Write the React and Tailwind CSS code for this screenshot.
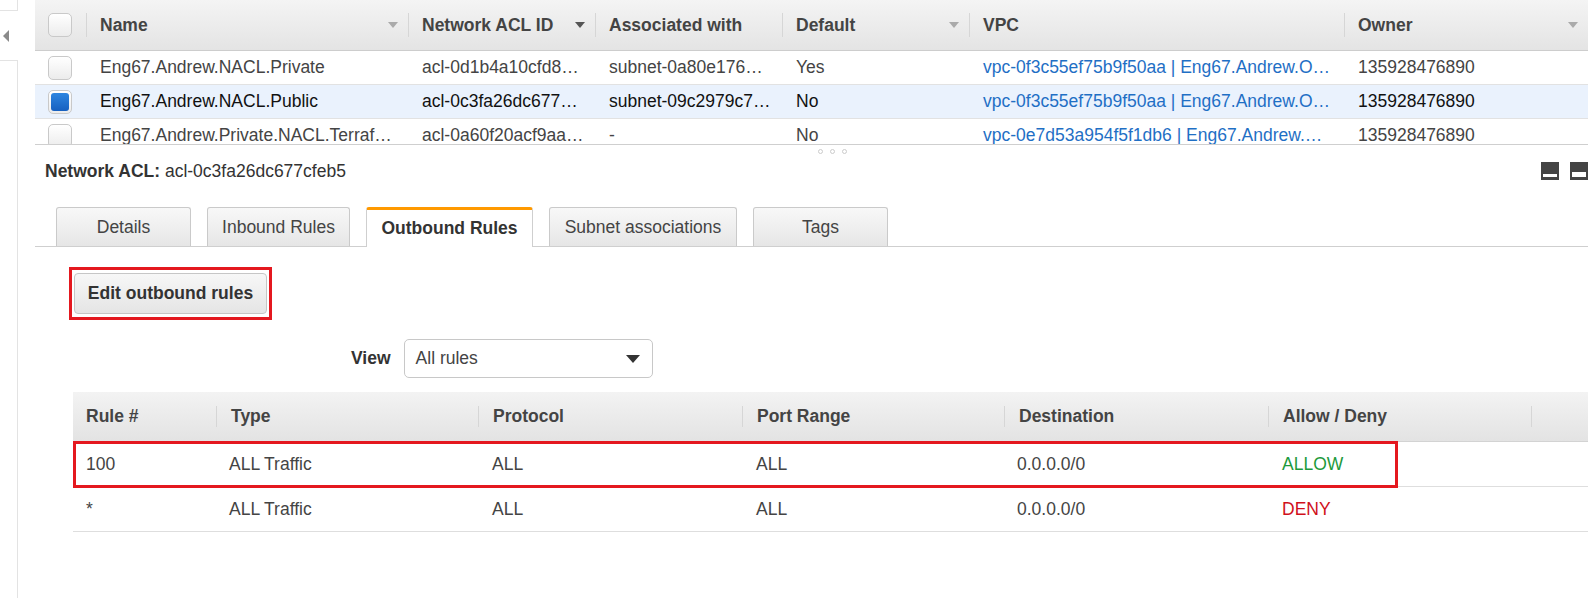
import React from 'react';

const font = "font-['Liberation_Sans',Arial,sans-serif]";

const topCols = [
  { label: 'Name', w: 'w-[322px]', arrow: 'light' },
  { label: 'Network ACL ID', w: 'w-[187px]', arrow: 'dark' },
  { label: 'Associated with', w: 'w-[187px]' },
  { label: 'Default', w: 'w-[187px]', arrow: 'light' },
  { label: 'VPC', w: 'w-[375px]' },
  { label: 'Owner', w: 'flex-1', arrow: 'light' },
];

const nacls = [
  {
    name: 'Eng67.Andrew.NACL.Private',
    id: 'acl-0d1b4a10cfd8…',
    assoc: 'subnet-0a80e176…',
    def: 'Yes',
    vpc: 'vpc-0f3c55ef75b9f50aa | Eng67.Andrew.O…',
    owner: '135928476890',
  },
  {
    name: 'Eng67.Andrew.NACL.Public',
    id: 'acl-0c3fa26dc677…',
    assoc: 'subnet-09c2979c7…',
    def: 'No',
    vpc: 'vpc-0f3c55ef75b9f50aa | Eng67.Andrew.O…',
    owner: '135928476890',
    selected: true,
  },
  {
    name: 'Eng67.Andrew.Private.NACL.Terraf…',
    id: 'acl-0a60f20acf9aa…',
    assoc: '-',
    def: 'No',
    vpc: 'vpc-0e7d53a954f5f1db6 | Eng67.Andrew.…',
    owner: '135928476890',
  },
];

const ruleCols = [
  { label: 'Rule #', w: 'w-[143px]' },
  { label: 'Type', w: 'w-[262px]' },
  { label: 'Protocol', w: 'w-[264px]' },
  { label: 'Port Range', w: 'w-[262px]' },
  { label: 'Destination', w: 'w-[264px]' },
  { label: 'Allow / Deny', w: 'w-[263px]' },
];

const rules = [
  { num: '100', type: 'ALL Traffic', proto: 'ALL', port: 'ALL', dest: '0.0.0.0/0', action: 'ALLOW' },
  { num: '*', type: 'ALL Traffic', proto: 'ALL', port: 'ALL', dest: '0.0.0.0/0', action: 'DENY' },
];

const tabs = [
  { label: 'Details', w: 'w-[135px]' },
  { label: 'Inbound Rules', w: 'w-[143px]' },
  { label: 'Outbound Rules', w: 'w-[167px]', active: true },
  { label: 'Subnet associations', w: 'w-[188px]' },
  { label: 'Tags', w: 'w-[135px]' },
];

function Checkbox({ checked }) {
  return (
    <div className="w-[24px] h-[24px] rounded-[5px] border border-[#c9c9c9] bg-gradient-to-b from-white to-[#ececec] flex items-center justify-center">
      {checked && <div className="w-[18px] h-[18px] rounded-[3px] bg-gradient-to-b from-[#2f86e0] to-[#1660c0]" />}
    </div>
  );
}

function SortArrow({ tone }) {
  if (!tone) return null;
  return (
    <svg width="10" height="6" viewBox="0 0 10 6" className="mr-[10px] shrink-0">
      <path d="M0 0h10L5 6z" fill={tone === 'dark' ? '#555' : '#aaa'} />
    </svg>
  );
}

function NaclTable() {
  return (
    <div className="h-[145px] overflow-hidden border-b border-[#cfcfcf]">
      <div className="flex h-[51px] border-b border-[#cdcdcd] bg-gradient-to-b from-[#f4f4f4] to-[#e4e4e4]">
        <div className="w-[51px] flex items-center pl-[13px]">
          <Checkbox />
        </div>
        {topCols.map((c) => (
          <div key={c.label} className={`${c.w} flex items-center border-l border-[#d6d6d6] my-[13px]`}>
            <span className="flex-1 pl-[13px] text-[17.5px] font-bold text-[#444]">{c.label}</span>
            <SortArrow tone={c.arrow} />
          </div>
        ))}
      </div>
      {nacls.map((r) => (
        <div
          key={r.name}
          className={`flex h-[34px] items-center border-b border-[#e2e2e2] text-[17.5px] ${
            r.selected ? 'bg-[#eaf2fd] text-[#111]' : 'text-[#444]'
          }`}
        >
          <div className="w-[51px] pl-[13px]">
            <Checkbox checked={r.selected} />
          </div>
          <div className="w-[322px] pl-[14px] whitespace-nowrap">{r.name}</div>
          <div className="w-[187px] pl-[14px] whitespace-nowrap">{r.id}</div>
          <div className="w-[187px] pl-[14px] whitespace-nowrap">{r.assoc}</div>
          <div className="w-[187px] pl-[14px] whitespace-nowrap">{r.def}</div>
          <div className="w-[375px] pl-[14px] whitespace-nowrap text-[#1f6fc5]">{r.vpc}</div>
          <div className="flex-1 pl-[14px] whitespace-nowrap">{r.owner}</div>
        </div>
      ))}
    </div>
  );
}

function PaneIcon({ big }) {
  return (
    <div className="w-[18px] h-[18px] bg-[#444] flex items-end justify-center pb-[3px]">
      <div className={`w-[14px] bg-white ${big ? 'h-[5px]' : 'h-[3px] w-[12px]'}`} />
    </div>
  );
}

function Tabs() {
  return (
    <div className="flex items-end gap-[16px] pl-[21px] border-b border-[#cfcfcf] h-[40px]">
      {tabs.map((t) =>
        t.active ? (
          <div
            key={t.label}
            className={`${t.w} h-[40px] -mb-px bg-white border-x border-[#cfcfcf] border-t-[3px] border-t-[#f90] rounded-t-[3px] flex items-center justify-center text-[17.5px] font-bold text-[#333]`}
          >
            {t.label}
          </div>
        ) : (
          <div
            key={t.label}
            className={`${t.w} h-[39px] bg-gradient-to-b from-[#f8f8f8] to-[#e6e6e6] border-x border-t border-[#cacaca] rounded-t-[3px] flex items-center justify-center text-[17.5px] text-[#444]`}
          >
            {t.label}
          </div>
        )
      )}
    </div>
  );
}

function RulesTable() {
  return (
    <div className="relative ml-[38px] mt-[14px]">
      <div className="flex h-[50px] border-b border-[#d3d3d3] bg-gradient-to-b from-[#f3f3f3] to-[#e3e3e3]">
        {ruleCols.map((c, i) => (
          <div
            key={c.label}
            className={`${c.w} flex items-center my-[14px] ${i > 0 ? 'border-l border-[#d6d6d6] pl-[14px]' : 'pl-[13px]'}`}
          >
            <span className="text-[17.5px] font-bold text-[#444]">{c.label}</span>
          </div>
        ))}
        <div className="flex-1 border-l border-[#d6d6d6] my-[14px]" />
      </div>
      {rules.map((r) => (
        <div key={r.num} className="flex h-[45px] items-center border-b border-[#dedede] text-[17.5px] text-[#444]">
          <div className="w-[143px] pl-[13px]">{r.num}</div>
          <div className="w-[262px] pl-[13px]">{r.type}</div>
          <div className="w-[264px] pl-[14px]">{r.proto}</div>
          <div className="w-[262px] pl-[14px]">{r.port}</div>
          <div className="w-[264px] pl-[13px]">{r.dest}</div>
          <div className={`w-[263px] pl-[14px] ${r.action === 'ALLOW' ? 'text-[#1d9a3c]' : 'text-[#d0101b]'}`}>
            {r.action}
          </div>
        </div>
      ))}
      <div className="absolute left-0 top-[49px] w-[1325px] h-[47px] border-[3px] border-[#e4181f] pointer-events-none" />
    </div>
  );
}

export default function App() {
  return (
    <div className={`${font} w-[1588px] h-[598px] overflow-hidden bg-white flex`}>
      <div className="w-[18px] shrink-0 flex flex-col">
        <div className="h-[11px] border-r border-b border-[#e3e3e3]" />
        <div className="h-[49px] flex items-center pl-[3px]">
          <svg width="6" height="12" viewBox="0 0 6 12">
            <path d="M6 0v12L0 6z" fill="#8a8a8a" />
          </svg>
        </div>
        <div className="flex-1 border-r border-t border-[#e3e3e3]" />
      </div>

      <div className="flex-1 pl-[17px] min-w-0">
        <NaclTable />

        <div className="relative pt-[9px] pl-[10px] flex items-center justify-between h-[34px] box-content">
          <div className="absolute left-[783px] top-[4px] flex gap-[7px]">
            <span className="w-[5px] h-[5px] rounded-full border border-[#ccc]" />
            <span className="w-[5px] h-[5px] rounded-full border border-[#ccc]" />
            <span className="w-[5px] h-[5px] rounded-full border border-[#ccc]" />
          </div>
          <div className="text-[17.5px] text-[#333]">
            <span className="font-bold">Network ACL:</span> acl-0c3fa26dc677cfeb5
          </div>
          <div className="flex gap-[11px] items-center">
            <PaneIcon />
            <PaneIcon big />
          </div>
        </div>

        <div className="mt-[19px]">
          <Tabs />
        </div>

        <div className="ml-[34px] mt-[20px] w-fit border-[3px] border-[#e4181f] px-[2px] py-[3px]">
          <button className="w-[193px] h-[41px] rounded-[4px] border border-[#c6c6c6] bg-gradient-to-b from-[#f7f7f7] to-[#e5e5e5] text-[17.5px] font-bold text-[#333]">
            Edit outbound rules
          </button>
        </div>

        <div className="flex items-center mt-[19px] ml-[316px] gap-[13px]">
          <span className="text-[17.5px] font-bold text-[#333]">View</span>
          <div className="w-[249px] h-[39px] border border-[#c8c8c8] rounded-[5px] flex items-center justify-between pl-[11px] pr-[12px]">
            <span className="text-[17.5px] text-[#444]">All rules</span>
            <svg width="14" height="8" viewBox="0 0 14 8">
              <path d="M0 0h14L7 8z" fill="#333" />
            </svg>
          </div>
        </div>

        <RulesTable />
      </div>
    </div>
  );
}
